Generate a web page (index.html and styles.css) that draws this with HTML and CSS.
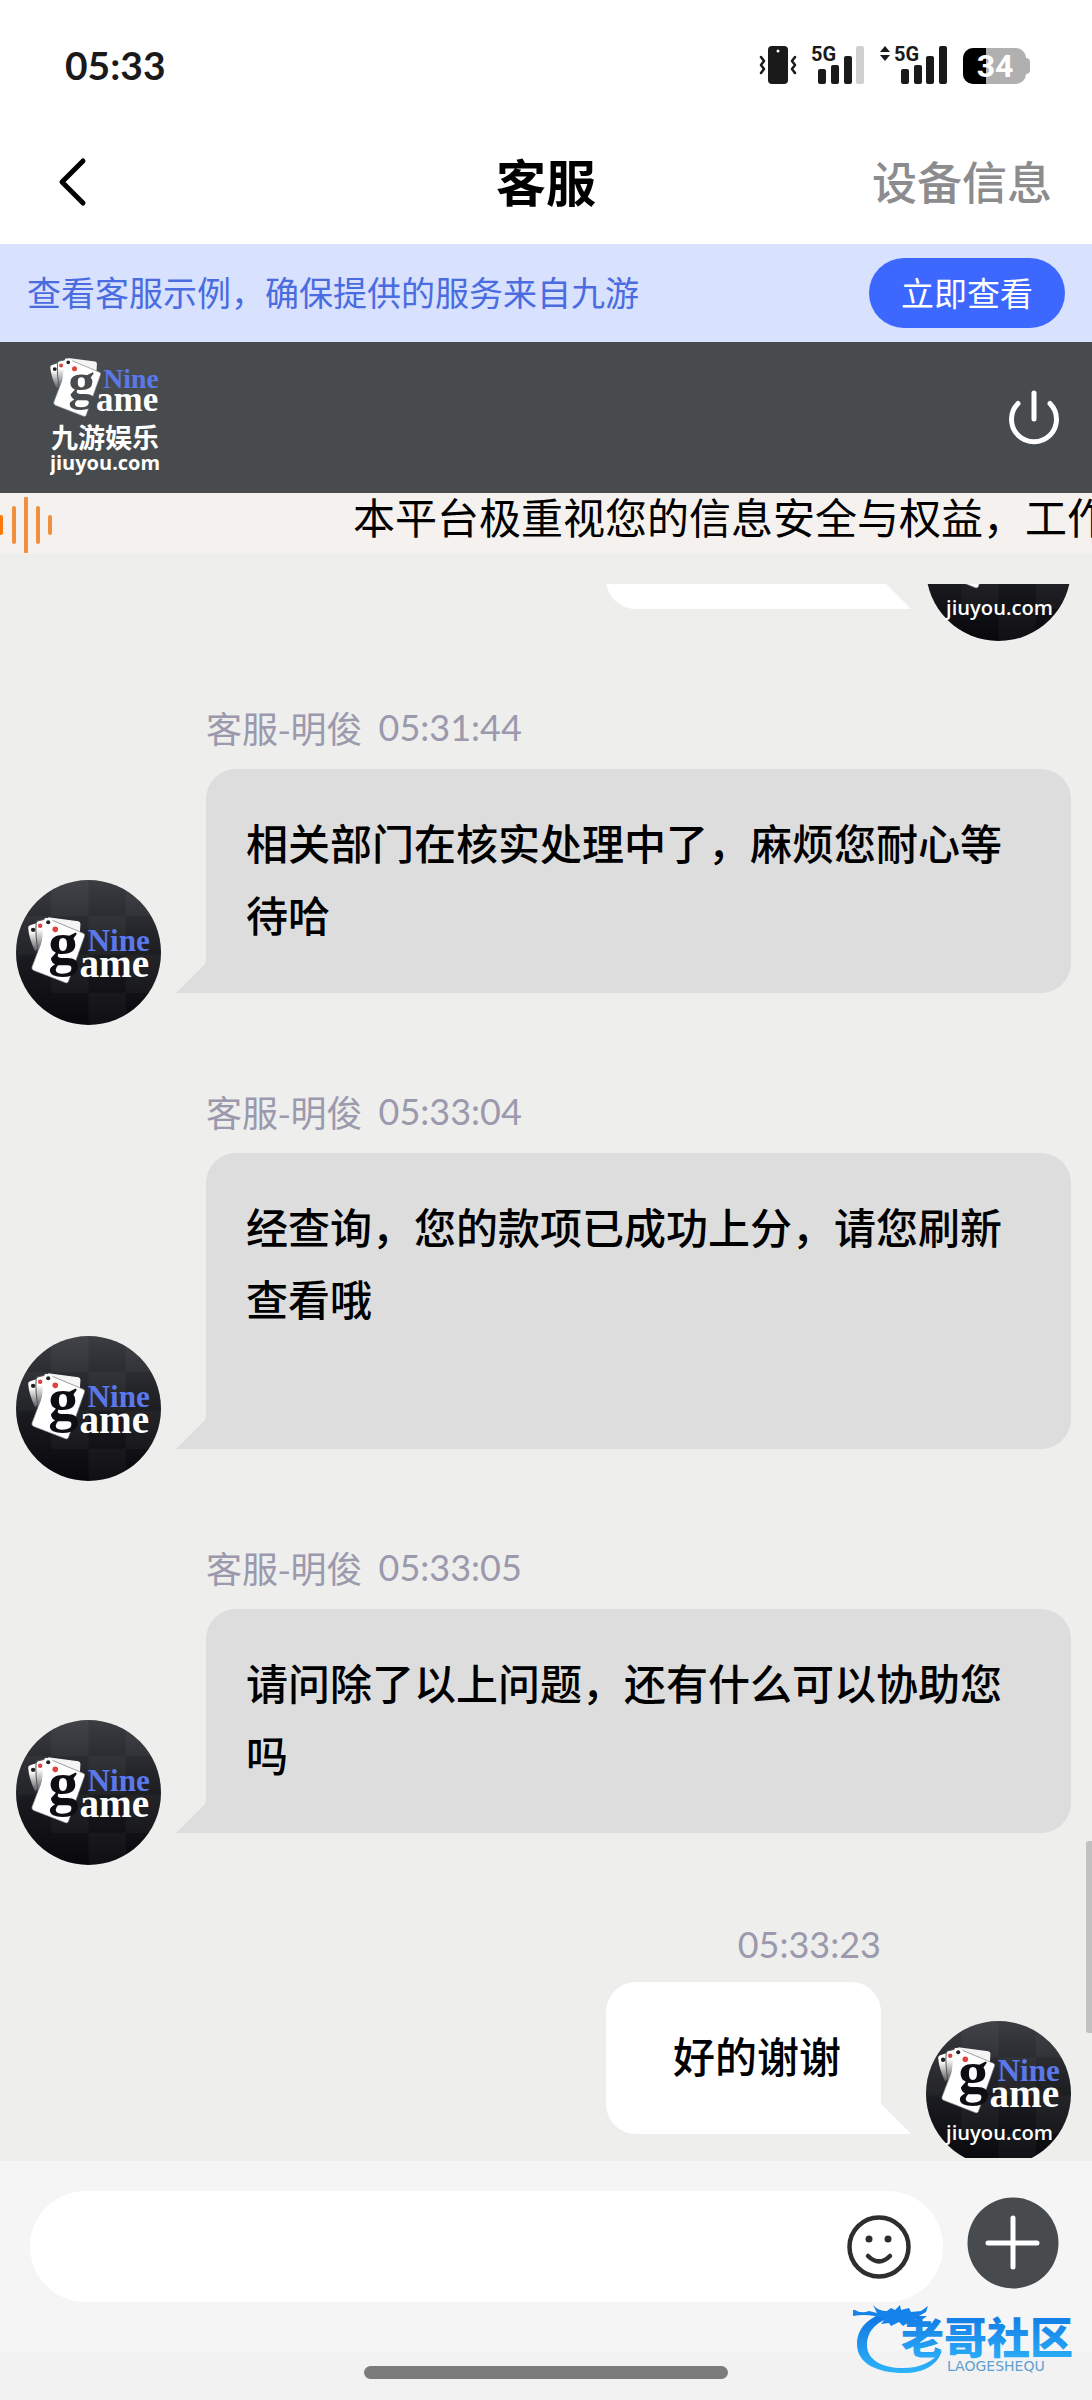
FILE: index.html
```html
<!DOCTYPE html>
<html lang="zh-CN">
<head>
    <meta charset="UTF-8">
    <meta name="viewport" content="width=device-width, initial-scale=1.0">
    <title>客服</title>
    <link rel="stylesheet" href="styles.css">
</head>
<body>
    <!-- shared logo parts -->
    <svg class="defs" aria-hidden="true">
        <defs>
            <linearGradient id="avatarBg" x1="0" y1="0" x2="0" y2="1">
                <stop offset="0" stop-color="#3c3d42"/>
                <stop offset="0.5" stop-color="#1d1e22"/>
                <stop offset="1" stop-color="#08080d"/>
            </linearGradient>
            <linearGradient id="fan" x1="0" y1="0" x2="0" y2="1">
                <stop offset="0.3" stop-color="#ffffff"/>
                <stop offset="1" stop-color="#55565a"/>
            </linearGradient>
            <linearGradient id="brandBlue" x1="0" y1="0" x2="0" y2="1">
                <stop offset="0" stop-color="#0d6fe0"/>
                <stop offset="1" stop-color="#2db4fa"/>
            </linearGradient>
            <clipPath id="round"><circle cx="72" cy="72" r="72"/></clipPath>
        </defs>
        <symbol id="mark" viewBox="12 36 122 68">
            <path d="M12 47.500q0-2 2-2.500l6-2 5 22-6 6q-6-12-7-23.500z" fill="url(#fan)"/>
            <path d="M20 43q0-2 2-2.500l7-1.500 1 24-8 8q-3-16-2-28z" fill="url(#fan)" stroke="#55565a" stroke-width="1"/>
            <path d="M32 37l30 4q2 .5 2 2.500l-1 17-32-12z" fill="#f4f4f4"/>
            <path d="M33 41q1-2 3-1l31 13q2 1 1 3L52 101q-1 2-3 1L18 90q-3-1-2-4z" fill="#fff" stroke="#77787c" stroke-width=".7"/>
            <path d="M30 37.500q-2 0-2 3l-3 25 8-22 4-4z" fill="#fff"/>
            <circle cx="17" cy="49.500" r="2.200" fill="#222"/>
            <circle cx="24" cy="45.500" r="2.200" fill="#d8453f"/>
            <circle cx="32" cy="42" r="2" fill="#222"/>
            <circle cx="39" cy="49" r="2.800" fill="#e0433f"/>
            <text class="mark-g" x="32" y="83">g</text>
            <text class="mark-nine" x="71" y="71">Nine</text>
            <text class="mark-ame" x="63" y="96">ame</text>
        </symbol>
        <symbol id="disc" viewBox="0 0 144 144">
            <g clip-path="url(#round)">
                <rect width="144" height="144" fill="url(#avatarBg)"/>
                <g fill="#fff" opacity=".03">
                    <rect x="35" y="0" width="37" height="36"/>
                    <rect x="109" y="0" width="35" height="36"/>
                    <rect x="0" y="36" width="35" height="38"/>
                    <rect x="72" y="36" width="37" height="38"/>
                    <rect x="35" y="74" width="37" height="38"/>
                    <rect x="109" y="74" width="35" height="38"/>
                    <rect x="72" y="112" width="37" height="32"/>
                </g>
            </g>
        </symbol>
        <symbol id="avatarAgent" viewBox="0 0 144 144">
            <use href="#disc" width="144" height="144"/>
            <use href="#mark" x="12" y="36" width="122" height="68"/>
        </symbol>
        <symbol id="avatarUser" viewBox="0 0 144 144">
            <use href="#disc" width="144" height="144"/>
            <use href="#mark" x="12" y="25" width="122" height="68"/>
            <text class="mark-url" x="73" y="118" text-anchor="middle">jiuyou.com</text>
        </symbol>
    </svg>

    <div class="status-bar">
        <span class="clock">05:33</span>
        <div class="status-icons">
            <svg width="38" height="38" viewBox="0 0 38 38">
                <rect x="9" y="0" width="20" height="38" rx="4" fill="#1a1a1a"/>
                <circle cx="19" cy="5" r="1.500" fill="#fff"/>
                <path d="M2 11l3 4-3 4 3 4-3 4M36 11l-3 4 3 4-3 4 3 4" fill="none" stroke="#1a1a1a" stroke-width="2.500" stroke-linecap="round" stroke-linejoin="round"/>
            </svg>
            <svg class="signal" width="51" height="38" viewBox="0 0 51 38">
                <text class="net" x="-2" y="15">5G</text>
                <rect x="5" y="23" width="8" height="15" rx="2" fill="#1a1a1a"/>
                <rect x="18" y="19" width="8" height="19" rx="2" fill="#1a1a1a"/>
                <rect x="31" y="10" width="8" height="28" rx="2" fill="#1a1a1a"/>
                <rect x="43" y="0" width="8" height="38" rx="2" fill="#d0d0d0"/>
            </svg>
            <svg class="signal" width="67" height="38" viewBox="0 0 67 38">
                <path d="M0 6l5-6 5 6zM0 9h10l-5 6z" fill="#1a1a1a"/>
                <text class="net" x="14" y="15">5G</text>
                <rect x="21" y="23" width="8" height="15" rx="2" fill="#1a1a1a"/>
                <rect x="34" y="19" width="8" height="19" rx="2" fill="#1a1a1a"/>
                <rect x="46" y="10" width="8" height="28" rx="2" fill="#1a1a1a"/>
                <rect x="59" y="0" width="8" height="38" rx="2" fill="#1a1a1a"/>
            </svg>
            <svg width="67" height="38" viewBox="0 0 67 38">
                <path d="M10 2h43a10 10 0 0 1 10 10q4 0 4 4v8q0 4-4 4a10 10 0 0 1-10 10H10a10 10 0 0 1-10-10V12A10 10 0 0 1 10 2z" fill="#b0b0b0"/>
                <path d="M10 2h13v36H10a10 10 0 0 1-10-10V12A10 10 0 0 1 10 2z" fill="#000"/>
                <text class="battery-level" x="32" y="31" text-anchor="middle">34</text>
            </svg>
        </div>
    </div>

    <header class="title-bar">
        <button class="icon-btn back-btn" aria-label="返回">
            <svg width="30" height="50" viewBox="0 0 30 50">
                <path d="M25 4L4 25l21 21" fill="none" stroke="#000" stroke-width="5" stroke-linecap="round" stroke-linejoin="round"/>
            </svg>
        </button>
        <h1>客服</h1>
        <a href="#" class="device-link">设备信息</a>
    </header>

    <div class="tip-bar">
        <span>查看客服示例，确保提供的服务来自九游</span>
        <button class="tip-btn">立即查看</button>
    </div>

    <div class="brand-bar">
        <svg class="brand-logo" width="110" height="122" viewBox="0 0 110 122">
            <use href="#mark" width="110" height="61"/>
            <text class="brand-name" x="55" y="91" text-anchor="middle">九游娱乐</text>
            <text class="brand-url" x="55" y="113" text-anchor="middle">jiuyou.com</text>
        </svg>
        <button class="icon-btn" aria-label="退出">
            <svg width="54" height="56" viewBox="0 0 54 56">
                <path d="M11 13.500A22.500 22.500 0 1 0 43 13.500M27 3v26" fill="none" stroke="#fff" stroke-width="5" stroke-linecap="round"/>
            </svg>
        </button>
    </div>

    <div class="notice">
        <svg width="52" height="56" viewBox="0 0 52 56">
            <g fill="#f0903f">
                <rect x="-2" y="18" width="5" height="20" rx="2" fill="#ff7a0a"/>
                <rect x="12" y="9" width="4" height="38" rx="2"/>
                <rect x="24" y="0" width="4" height="56" rx="1"/>
                <rect x="36" y="9" width="4" height="38" rx="2"/>
                <rect x="48" y="18" width="4" height="20" rx="2"/>
            </g>
        </svg>
        <span class="notice-text">本平台极重视您的信息安全与权益，工作</span>
    </div>

    <main class="chat">
        <div class="chat-list">
            <div class="message mine">
                <div class="message-body">
                    <div class="bubble bubble-cut"></div>
                </div>
                <svg class="avatar" viewBox="0 0 144 144"><use href="#avatarUser"/></svg>
            </div>

            <div class="message">
                <svg class="avatar" viewBox="0 0 144 144"><use href="#avatarAgent"/></svg>
                <div class="message-body">
                    <div class="meta"><span>客服-明俊</span><time>05:31:44</time></div>
                    <div class="bubble">相关部门在核实处理中了，麻烦您耐心等待哈</div>
                </div>
            </div>

            <div class="message">
                <svg class="avatar" viewBox="0 0 144 144"><use href="#avatarAgent"/></svg>
                <div class="message-body">
                    <div class="meta"><span>客服-明俊</span><time>05:33:04</time></div>
                    <div class="bubble">经查询，您的款项已成功上分，请您刷新查看哦<br><br></div>
                </div>
            </div>

            <div class="message">
                <svg class="avatar" viewBox="0 0 144 144"><use href="#avatarAgent"/></svg>
                <div class="message-body">
                    <div class="meta"><span>客服-明俊</span><time>05:33:05</time></div>
                    <div class="bubble">请问除了以上问题，还有什么可以协助您吗</div>
                </div>
            </div>

            <div class="message mine">
                <div class="message-body">
                    <div class="meta"><time>05:33:23</time></div>
                    <div class="bubble">好的谢谢</div>
                </div>
                <svg class="avatar" viewBox="0 0 144 144"><use href="#avatarUser"/></svg>
            </div>
        </div>
        <div class="scroll-thumb"></div>
    </main>

    <footer class="composer">
        <div class="input-box">
            <input type="text" aria-label="输入消息">
            <button class="icon-btn" aria-label="表情">
                <svg width="64" height="64" viewBox="0 0 64 64">
                    <circle cx="32" cy="32" r="29.500" fill="none" stroke="#2e2e2e" stroke-width="4.500"/>
                    <circle cx="22" cy="24" r="3.500" fill="#2e2e2e"/>
                    <circle cx="41" cy="24" r="3.500" fill="#2e2e2e"/>
                    <path d="M21 41q11 11 22 0" fill="none" stroke="#2e2e2e" stroke-width="4.500" stroke-linecap="round"/>
                </svg>
            </button>
        </div>
        <button class="icon-btn" aria-label="更多">
            <svg width="92" height="92" viewBox="0 0 92 92">
                <circle cx="46" cy="46" r="45.500" fill="#484b4e"/>
                <path d="M46 21v49M21 46h49" stroke="#fff" stroke-width="5" stroke-linecap="round"/>
            </svg>
        </button>
    </footer>
    <div class="home-area"><div class="home-bar"></div></div>

    <svg class="watermark" width="224" height="72" viewBox="0 0 224 72">
        <path d="M50 8C20 9 4 24 4 42c0 19 19 29 47 29 20 0 34-8 38-23-9 12-22 18-39 18-21 0-36-8-36-23C14 27 27 15 52 13z" fill="url(#brandBlue)"/>
        <path d="M2 8q6 4 14 1l8 2-4-8q5 6 14 6l4-3 4 2 5-5 1 5 8-2 2 4 10-1 7-5-2 6-7 4 8 0-4 3-8 0 6 5-12-2-6 4-4-4-8 4-2-3-8 1 4-5q-16-6-32-3-4-2-4-6z" fill="#1482ea"/>
        <text class="wm-name" x="48" y="52" fill="url(#brandBlue)">老哥社区</text>
        <text class="wm-sub" x="94" y="69">LAOGESHEQU</text>
    </svg>
</body>
</html>
```
FILE: styles.css
```css
* {
    box-sizing: border-box;
}
body {
    margin: 0;
    height: 100vh;
    display: flex;
    flex-direction: column;
    position: relative;
    overflow: hidden;
    background: #eeeeec;
    color: #000;
    font-family: "Noto Sans CJK SC", sans-serif;
}
svg {
    display: block;
    flex-shrink: 0;
}
.defs {
    position: absolute;
    width: 0;
    height: 0;
}
.icon-btn {
    padding: 0;
    border: none;
    background: none;
    cursor: pointer;
}

/* status bar */
.status-bar {
    flex-shrink: 0;
    height: 120px;
    padding: 10px 62px 0 65px;
    background: #fff;
    display: flex;
    align-items: center;
    justify-content: space-between;
}
.clock {
    font-family: Lato, "Noto Sans CJK SC", sans-serif;
    font-size: 39px;
    font-weight: 700;
    color: #1a1a1a;
}
.status-icons {
    display: flex;
    gap: 16px;
}
.signal {
    overflow: visible;
}
.net {
    font: 700 20px Roboto, sans-serif;
    fill: #1a1a1a;
}
.battery-level {
    font: 700 32px Roboto, sans-serif;
    fill: #fff;
}

/* title */
.title-bar {
    flex-shrink: 0;
    height: 124px;
    padding: 0 40px 4px;
    background: #fff;
    display: grid;
    grid-template-columns: 1fr auto 1fr;
    align-items: center;
}
.back-btn {
    justify-self: start;
    margin: 4px 0 0 18px;
}
.title-bar h1 {
    margin: 0;
    font-size: 50px;
    font-weight: 700;
}
.device-link {
    justify-self: end;
    font-size: 45px;
    font-weight: 500;
    color: #8c8c8e;
    text-decoration: none;
}

.tip-bar {
    flex-shrink: 0;
    height: 98px;
    padding: 0 27px;
    background: #d8e1fe;
    color: #4a6ce0;
    font-size: 34px;
    display: flex;
    align-items: center;
    justify-content: space-between;
}
.tip-bar span {
    padding-bottom: 4px;
}
.tip-btn {
    width: 196px;
    height: 70px;
    padding: 0 0 2px;
    border: none;
    border-radius: 35px;
    background: #3d68ff;
    color: #fff;
    font-family: inherit;
    font-size: 33px;
    cursor: pointer;
}

.brand-bar {
    flex-shrink: 0;
    height: 151px;
    padding: 0 31px 0 50px;
    background: #484b4d;
    color: #484b4d;
    display: flex;
    align-items: center;
    justify-content: space-between;
}
.mark-g {
    font: 700 60px "Liberation Serif", serif;
    fill: currentColor;
}
.mark-nine {
    font: 700 31px "Liberation Serif", serif;
    fill: #5b78ea;
}
.mark-ame {
    font: 700 39px "Liberation Serif", serif;
    fill: #fff;
}
.mark-url {
    font: 600 20px "Open Sans", sans-serif;
    fill: #fff;
}
.brand-name {
    font-size: 27px;
    font-weight: 700;
    fill: #fff;
}
.brand-url {
    font: 700 20px "Open Sans", sans-serif;
    fill: #fff;
}

.notice {
    flex-shrink: 0;
    height: 60px;
    background: #f4f1ee;
    display: flex;
    align-items: flex-end;
    overflow: hidden;
}
.notice-text {
    margin-left: 301px;
    padding-bottom: 12px;
    font-size: 42px;
    line-height: 50px;
    white-space: nowrap;
}

/* chat */
.chat {
    flex: 1;
    min-height: 0;
    padding: 31px 0 3px;
    position: relative;
    display: flex;
}
.chat-list {
    flex: 1;
    min-width: 0;
    display: flex;
    flex-direction: column;
    justify-content: flex-end;
    overflow: hidden;
    padding: 0 21px 0 16px;
}
.message {
    flex-shrink: 0;
    display: flex;
    align-items: flex-end;
    gap: 45px;
    margin-bottom: 60px;
}
.message.mine {
    justify-content: flex-end;
}
.message:last-child {
    margin-top: -7px;
    margin-bottom: -8px;
}
.avatar {
    width: 145px;
    height: 145px;
    color: #0d0d12;
}
.message-body {
    flex: 1;
    padding-bottom: 32px;
}
.mine .message-body {
    flex: none;
}
.meta {
    display: flex;
    gap: 16px;
    margin-bottom: 16px;
    font-size: 36px;
    line-height: 52px;
    color: #9b99ad;
}
.meta time {
    font-family: Lato, "Noto Sans CJK SC", sans-serif;
}
.mine .meta {
    justify-content: flex-end;
    margin-bottom: 12px;
}
.bubble {
    position: relative;
    padding: 37px 40px 43px;
    border-radius: 30px 30px 30px 0;
    background: #dddddd;
    font-size: 42px;
    font-weight: 500;
    line-height: 72px;
}
.bubble::before {
    content: "";
    position: absolute;
    bottom: 0;
    right: 100%;
    border-left: 30px solid transparent;
    border-bottom: 30px solid #dddddd;
}
.mine .bubble {
    padding-left: 67px;
    border-radius: 30px 30px 0 30px;
    background: #fff;
}
.mine .bubble::before {
    right: auto;
    left: 100%;
    border-left: none;
    border-right: 30px solid transparent;
    border-bottom-color: #fff;
}
.bubble-cut {
    width: 275px;
    height: 152px;
}
.scroll-thumb {
    position: absolute;
    right: 0;
    bottom: 128px;
    width: 6px;
    height: 192px;
    border-radius: 3px 0 0 3px;
    background: #c1c1c1;
}

/* input */
.composer {
    flex-shrink: 0;
    height: 191px;
    padding: 30px 33px 50px 30px;
    background: #f5f5f5;
    display: flex;
    align-items: center;
    gap: 24px;
}
.composer > .icon-btn {
    padding-bottom: 8px;
}
.input-box {
    flex: 1;
    height: 111px;
    padding: 0 32px 0 48px;
    border-radius: 56px;
    background: #fff;
    display: flex;
    align-items: center;
}
.input-box input {
    flex: 1;
    min-width: 0;
    height: 80px;
    border: none;
    outline: none;
    background: none;
    font-family: inherit;
    font-size: 42px;
}
.home-area {
    flex-shrink: 0;
    height: 48px;
    padding-top: 14px;
    background: #f2f2f2;
}
.home-bar {
    width: 364px;
    height: 13px;
    margin: 0 auto;
    border-radius: 7px;
    background: #7b7b7b;
}
.watermark {
    position: absolute;
    right: 15px;
    bottom: 26px;
}
.wm-name {
    font-size: 43px;
    font-weight: 900;
}
.wm-sub {
    font: 14px "DejaVu Sans", sans-serif;
    fill: #5f9fce;
}
```
